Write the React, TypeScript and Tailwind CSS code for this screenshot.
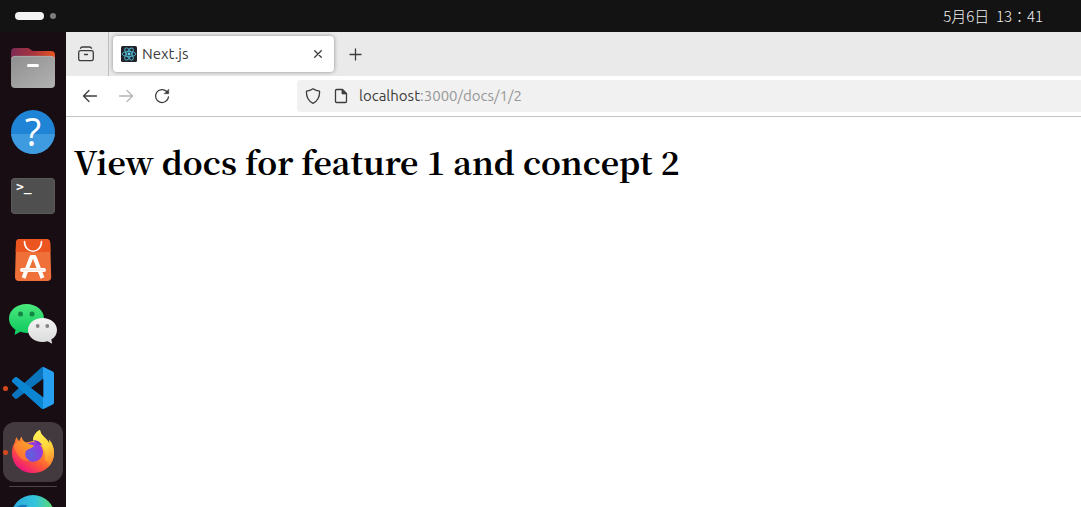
import type { ReactNode } from "react";

function FilesIcon() {
  return (
    <svg className="size-12" viewBox="0 0 48 48" aria-hidden="true">
      <defs>
        <linearGradient id="files-back" x1="0" x2="1">
          <stop offset="0" stopColor="#7d2a52" />
          <stop offset="0.5" stopColor="#a8343f" />
          <stop offset="1" stopColor="#e95420" />
        </linearGradient>
        <linearGradient id="files-front" x1="0" y1="0" x2="1" y2="1">
          <stop offset="0" stopColor="#8f8f8f" />
          <stop offset="1" stopColor="#b2b2b2" />
        </linearGradient>
      </defs>
      <path d="M2 20V8q0-4 4-4h12q2 0 3 1l1 1q1 1 3 1h17q4 0 4 4v9z" fill="url(#files-back)" />
      <rect x="2" y="12" width="44" height="32" rx="4" fill="url(#files-front)" />
      <path d="M2.5 15q.5-2.7 3.5-2.7h36q3 0 3.5 2.7" fill="none" stroke="#bdbdbd" strokeWidth="0.6" />
      <rect x="18" y="20" width="12" height="3" rx="1.5" fill="#fff" />
    </svg>
  );
}

function HelpIcon() {
  return (
    <svg className="size-12 overflow-visible" viewBox="0 0 48 48" aria-hidden="true">
      <circle cx="24" cy="24" r="22" fill="#1f83d6" />
      <path d="M2.1 26a22 22 0 0 0 43.8 0z" fill="#3f9be0" />
      <text x="24" y="38" textAnchor="middle" fontSize="38" fill="#fff" fontFamily="Open Sans, sans-serif">
        ?
      </text>
    </svg>
  );
}

function TerminalIcon() {
  return (
    <svg className="size-12" viewBox="0 0 48 48" aria-hidden="true">
      <rect x="2" y="6" width="44" height="36" rx="4" fill="#4f4f4f" />
      <rect x="2.5" y="6.5" width="43" height="35" rx="3.5" fill="none" stroke="#5a5a5a" />
      <text x="7" y="19" fontSize="13" fontWeight="700" fill="#fff" fontFamily="DejaVu Sans Mono, monospace">
        &gt;_
      </text>
    </svg>
  );
}

function SoftwareIcon() {
  return (
    <svg className="size-12" viewBox="0 0 48 48" aria-hidden="true">
      <path d="M11 3h26q4 0 4.2 4l1 34q0 4-4 4H10q-4 0-4-4l1-34q0-4 4-4z" fill="#f0703a" />
      <path d="M11 3h26q4 0 4.2 4l.3 9H6.7L7 7q0-4 4-4z" fill="#ec5420" />
      <path d="M15.5 5.5c0 13 17 13 17 0" fill="none" stroke="#fff" strokeWidth="1.6" strokeLinecap="round" />
      <path d="M14.5 42 22.5 21h3L33.5 42" fill="none" stroke="#fff" strokeWidth="4" strokeLinejoin="round" />
      <rect x="11" y="32" width="26" height="4" rx="2" fill="#fff" />
      <path d="M13 34h22" stroke="#f6cdb9" strokeWidth="0.8" />
    </svg>
  );
}

function WeChatIcon() {
  return (
    <svg className="size-12" viewBox="0 0 48 48" aria-hidden="true">
      <defs>
        <linearGradient id="wechat-green" x1="0" y1="0" x2="0" y2="1">
          <stop offset="0" stopColor="#4be87c" />
          <stop offset="1" stopColor="#0bc95f" />
        </linearGradient>
        <linearGradient id="wechat-white" x1="0" y1="0" x2="0" y2="1">
          <stop offset="0" stopColor="#f4f4f4" />
          <stop offset="1" stopColor="#dadada" />
        </linearGradient>
      </defs>
      <path
        d="M17.5 4C7.5 4 0 10.5 0 18.5c0 4.7 2.6 8.7 6.5 11.3L5.5 35l5.8-3.2c2 .7 4 1.2 6.2 1.2C27.5 33 35 26.5 35 18.5S27.5 4 17.5 4z"
        fill="url(#wechat-green)"
      />
      <circle cx="11.5" cy="14" r="2.5" fill="#128544" />
      <circle cx="23" cy="14" r="2.5" fill="#128544" />
      <path
        d="M33.5 18C25.3 18 19 23.4 19 30s6.3 12 14.5 12c1.9 0 3.6-.3 5.2-.8l4.5 2.5-.9-4.2C46 37.3 48 33.9 48 30c0-6.6-6.3-12-14.5-12z"
        fill="url(#wechat-white)"
      />
      <circle cx="28.7" cy="26" r="1.9" fill="#858585" />
      <circle cx="38.3" cy="26" r="1.9" fill="#858585" />
    </svg>
  );
}

function CodeIcon() {
  return (
    <svg className="size-12" viewBox="0 0 48 48" aria-hidden="true">
      <defs>
        <clipPath id="code-shape">
          <path
            clipRule="evenodd"
            d="M23.15 2.587L18.21.21a1.494 1.494 0 0 0-1.705.29l-9.46 8.63-4.12-3.128a.999.999 0 0 0-1.276.057L.327 7.261A1 1 0 0 0 .326 8.74L3.899 12 .326 15.26a1 1 0 0 0 .001 1.479L1.65 17.94a.999.999 0 0 0 1.276.057l4.12-3.128 9.46 8.63a1.492 1.492 0 0 0 1.704.29l4.942-2.377A1.5 1.5 0 0 0 24 20.06V3.939a1.5 1.5 0 0 0-.85-1.352zm-5.146 14.861L10.826 12l7.178-5.448v10.896z"
          />
        </clipPath>
      </defs>
      <g transform="translate(3 3) scale(1.75)">
        <g clipPath="url(#code-shape)">
          <path d="M0 0h24v24H0z" fill="#0a74bd" />
          <path d="M-1 7.9 2 4.9 18 17.5V25z" fill="#0c86d2" />
          <path d="M17.7 0H24v24h-6.3z" fill="#27a0f2" />
        </g>
      </g>
    </svg>
  );
}

function FirefoxIcon() {
  return (
    <svg className="size-12" viewBox="0 0 48 48" aria-hidden="true">
      <defs>
        <linearGradient id="fox-body" x1="0.9" y1="0.2" x2="0.35" y2="1">
          <stop offset="0" stopColor="#ffd93b" />
          <stop offset="0.35" stopColor="#ff9a2c" />
          <stop offset="0.65" stopColor="#ff5a36" />
          <stop offset="1" stopColor="#f0187a" />
        </linearGradient>
        <linearGradient id="fox-flame" x1="0.3" y1="0" x2="0.6" y2="1">
          <stop offset="0" stopColor="#fff25a" />
          <stop offset="0.5" stopColor="#ffd83c" />
          <stop offset="1" stopColor="#ff8a2e" />
        </linearGradient>
        <radialGradient id="fox-globe" cx="0.4" cy="0.65" r="0.65">
          <stop offset="0" stopColor="#5a62dc" />
          <stop offset="1" stopColor="#9a35e0" />
        </radialGradient>
        <linearGradient id="fox-head" x1="0" y1="1" x2="0.8" y2="0">
          <stop offset="0" stopColor="#ff5f33" />
          <stop offset="1" stopColor="#ffa52b" />
        </linearGradient>
      </defs>
      <path
        d="M31 2c.8 5 4 6.5 7 10 1.200 1.5 2 2.7 2.5 4 .2-1.5 0-3-.5-4.5 3.5 4 5 8.5 5 13.5C45 36.500 36 45 24 45S3 36.500 3 25c0-4.500 1-8 3-11 .2-2 .7-3.500 1.700-5 .5 1.800 1.200 3 2.600 4C11 11 11.800 9.500 12.500 8.500c.6 2.700 2 4.700 4.500 6l7-1.500c-.2-5 3-9 7-11z"
        fill="url(#fox-body)"
      />
      <path
        d="M31 2c.8 5 4 6.5 7 10 1.2 1.5 2 2.7 2.5 4 .2-1.5 0-3-.5-4.5 3.5 4 5 8.5 5 13.5 0 5-2 9.5-5 13 0-3-1-5-4-6 1-6-1-14-6-17l-6-2c0-5 3-9 7-11z"
        fill="url(#fox-flame)"
      />
      <circle cx="24" cy="24" r="10" fill="url(#fox-globe)" />
      <path d="M24 12.500c3.500-1.200 7.500 1.500 9.500 5-1.500-.6-2.500-.8-3.500-.5-1.500-1.500-4-3-6-4.500z" fill="#7a2fd0" />
      <path
        d="M5 18c2-3.700 5-4.700 8-4.200 2.700 0 4.200.7 5.500 2l5 1.200c1.200.3 1.500 1 .8 1.700-1.600 1.800-5.800 2-7.300 4.300C15 26.500 17 31 21 33 13 34 7 27 5 18z"
        fill="url(#fox-head)"
      />
    </svg>
  );
}

function EdgeIcon() {
  return (
    <svg className="size-12" viewBox="0 0 48 48" aria-hidden="true">
      <defs>
        <linearGradient id="edge-wave" x1="0" x2="1">
          <stop offset="0" stopColor="#2aa6dc" />
          <stop offset="0.55" stopColor="#34c4dc" />
          <stop offset="1" stopColor="#62dc62" />
        </linearGradient>
      </defs>
      <circle cx="24" cy="24" r="22" fill="url(#edge-wave)" />
      <path d="M7 14.5c3-2.500 7-3.500 12-2-4 2-6 5-7 9z" fill="#1a78bd" />
    </svg>
  );
}

function ReactFavicon() {
  return (
    <svg className="size-4 shrink-0" viewBox="0 0 16 16" aria-hidden="true">
      <rect width="16" height="16" rx="1.5" fill="#20232a" />
      <g fill="none" stroke="#4fb3cd" strokeWidth="0.9">
        <ellipse cx="8" cy="8" rx="6.8" ry="2.6" />
        <ellipse cx="8" cy="8" rx="6.8" ry="2.6" transform="rotate(60 8 8)" />
        <ellipse cx="8" cy="8" rx="6.8" ry="2.6" transform="rotate(120 8 8)" />
      </g>
      <circle cx="8" cy="8" r="1.4" fill="#61dafb" />
    </svg>
  );
}

/** 16px line icon used throughout the browser toolbar. */
function LineIcon({ children }: { children: ReactNode }) {
  return (
    <svg
      className="size-4 shrink-0"
      viewBox="0 0 16 16"
      fill="none"
      stroke="currentColor"
      strokeWidth="1.3"
      strokeLinecap="round"
      strokeLinejoin="round"
      aria-hidden="true"
    >
      {children}
    </svg>
  );
}

interface DockButtonProps {
  label: string;
  running?: boolean;
  active?: boolean;
  children: ReactNode;
}

function DockButton({ label, running = false, active = false, children }: DockButtonProps) {
  return (
    <button
      type="button"
      aria-label={label}
      className={`relative flex size-[60px] shrink-0 items-center justify-center rounded-xl ${
        active ? "bg-[#433a3f]" : ""
      }`}
    >
      {running && <span className="absolute left-0 size-[5px] rounded-full bg-[#d8481c]" />}
      {children}
    </button>
  );
}

function TopBar() {
  return (
    <header className="flex h-8 shrink-0 items-center justify-between bg-[#131313] pl-[15px] pr-[38px]">
      <button type="button" aria-label="Workspaces" className="flex items-center gap-1.5">
        <span className="h-2 w-[29px] rounded-full bg-[#f2f2f2]" />
        <span className="size-1.5 rounded-full bg-[#7d7d7d]" />
      </button>
      <time className="whitespace-pre font-['Noto_Sans_CJK_TC',sans-serif] text-[15px] font-light text-[#f2f2f2]">
        5月6日  13：41
      </time>
    </header>
  );
}

function Dock() {
  return (
    <nav
      aria-label="Dock"
      className="flex w-[66px] shrink-0 flex-col items-center gap-1 overflow-hidden bg-[#190d14] pt-1.5"
    >
      <DockButton label="Files">
        <FilesIcon />
      </DockButton>
      <DockButton label="Help">
        <HelpIcon />
      </DockButton>
      <DockButton label="Terminal">
        <TerminalIcon />
      </DockButton>
      <DockButton label="Software">
        <SoftwareIcon />
      </DockButton>
      <DockButton label="WeChat">
        <WeChatIcon />
      </DockButton>
      <DockButton label="Visual Studio Code" running>
        <CodeIcon />
      </DockButton>
      <DockButton label="Firefox" running active>
        <FirefoxIcon />
      </DockButton>
      <div className="flex flex-col items-center">
        <hr className="w-12 border-[#4b4348]" />
        <DockButton label="Microsoft Edge">
          <EdgeIcon />
        </DockButton>
      </div>
    </nav>
  );
}

function TabStrip() {
  return (
    <div className="flex h-11 items-center bg-[#eaeaea] text-[#3c3c3c]">
      <button
        type="button"
        aria-label="Firefox View"
        className="flex h-full w-[43px] items-center border-r border-[#bdbdbd] pl-3"
      >
        <LineIcon>
          <rect x="0.7" y="4.7" width="14.6" height="10" rx="1.8" />
          <path d="M2.5 2.3Q3 1 4.5 1h7q1.5 0 2 1.3M6.5 8.5h3" />
        </LineIcon>
      </button>
      <div className="ml-1 flex h-9 w-[221px] items-center gap-[5px] rounded bg-white px-2 shadow-[0_0_4px_rgba(0,0,0,0.4)]">
        <ReactFavicon />
        <span className="flex-1 text-[15px]">Next.js</span>
        <button type="button" aria-label="Close tab">
          <LineIcon>
            <path d="m4.7 4.7 6.600 6.600m0-6.600-6.600 6.600" />
          </LineIcon>
        </button>
      </div>
      <button type="button" aria-label="New tab" className="ml-[13px]">
        <LineIcon>
          <path d="M8.5 3v11M3 8.5h11" />
        </LineIcon>
      </button>
    </div>
  );
}

function NavBar() {
  return (
    <div className="flex items-center gap-5 border-b border-[#c4c4c4] bg-white py-1 pl-4 text-[#3c3c3c]">
      <button type="button" aria-label="Back">
        <LineIcon>
          <path d="M14.5 8H1.5m5.5-5.5L1.5 8 7 13.5" />
        </LineIcon>
      </button>
      <button type="button" aria-label="Forward" disabled className="text-[#b4b4b4]">
        <LineIcon>
          <path d="M1.5 8h13M9 2.5 14.5 8 9 13.5" />
        </LineIcon>
      </button>
      <button type="button" aria-label="Reload">
        <LineIcon>
          <path d="M14.5 8.8A6.5 6.5 0 1 1 12.7 3.5" />
          <path d="M14.7 1.5v4.2h-4.2z" fill="currentColor" strokeWidth="0.6" />
        </LineIcon>
      </button>
      <div className="ml-[107px] flex h-8 flex-1 items-center gap-2.5 rounded-l bg-[#f1f1f1] pl-2">
        <span className="flex gap-3">
          <LineIcon>
            <path d="M8 .8Q11 2.8 14.5 3.2C15 8.5 12.5 13.5 8 15.3 3.5 13.5 1 8.5 1.5 3.2 5 2.8 8 .8 8 .8z" />
          </LineIcon>
          <LineIcon>
            <path d="M3.7 1.5h5.8L13.5 5.5v7.8q0 1.2-1.2 1.2H3.7Q2.5 14.5 2.5 13.3V2.7q0-1.2 1.2-1.2z" />
            <path d="M9 1.5v4.4h4.5z" fill="currentColor" strokeWidth="0.8" />
          </LineIcon>
        </span>
        <a href="http://localhost:3000/docs/1/2" className="text-[15px] text-[#979797]">
          <span className="text-[#3c3c3c]">localhost</span>:3000/docs/1/2
        </a>
      </div>
    </div>
  );
}

export default function App() {
  return (
    <div className="flex h-screen flex-col overflow-hidden font-['Ubuntu','Noto_Sans',sans-serif]">
      <TopBar />
      <div className="flex min-h-0 flex-1">
        <Dock />
        <div className="flex min-w-0 flex-1 flex-col bg-white">
          <TabStrip />
          <NavBar />
          <main className="flex-1 px-2 py-6">
            <h1 className="font-['Noto_Serif_CJK_SC','Liberation_Serif',serif] text-[32px] leading-10 font-bold text-black">
              View docs for feature 1 and concept 2
            </h1>
          </main>
        </div>
      </div>
    </div>
  );
}
